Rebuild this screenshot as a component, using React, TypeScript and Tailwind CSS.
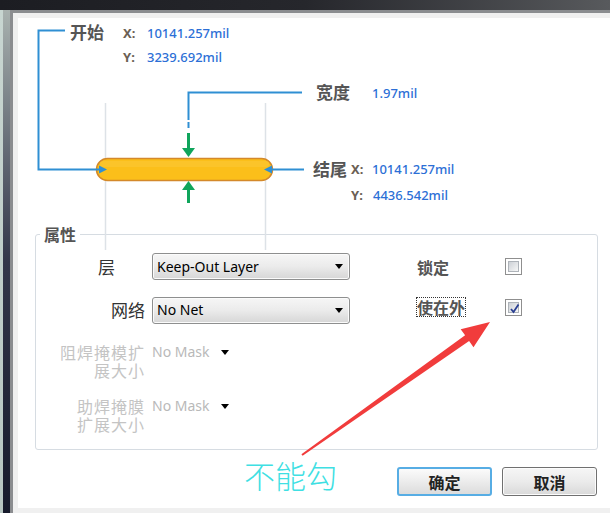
import React from "react";

const CJK = { fontFamily: "'Noto Sans CJK SC', 'Noto Sans', sans-serif" };
const LAT = { fontFamily: "'Noto Sans', 'Noto Sans CJK SC', sans-serif" };

function Tri({ color = "#000" }: { color?: string }) {
  return (
    <svg width="8" height="5" viewBox="0 0 8 5">
      <polygon points="0,0 8,0 4,5" fill={color} />
    </svg>
  );
}

function Select({ value }: { value: string }) {
  return (
    <div className="ml-[7px] flex h-[27px] w-[198px] items-center justify-between rounded-[3px] border border-[#8e8f8f] bg-gradient-to-b from-[#f6f6f6] via-[#ebebeb] to-[#d6d6d6] pl-[4px] pr-[6px] shadow-[inset_0_0_0_1px_#fbfbfb]">
      <span className="text-[14px] leading-[18px] text-black" style={LAT}>
        {value}
      </span>
      <Tri />
    </div>
  );
}

function Check({ checked }: { checked?: boolean }) {
  return (
    <div className="flex h-[17px] w-[17px] items-center justify-center border border-[#8f8f8f] bg-white p-[2px]">
      <div className="relative h-full w-full border border-[#aeb3b9] bg-gradient-to-br from-[#cdd1d6] to-[#f7f7f7]">
        {checked && (
          <svg className="absolute left-[0px] top-[0px]" width="11" height="11" viewBox="0 0 11 11">
            <path d="M2 6 L4.5 9 L9.5 1.5" stroke="#2a3f92" strokeWidth="1.8" fill="none" />
          </svg>
        )}
      </div>
    </div>
  );
}

function DiagLabel({ cls, children }: { cls: string; children: React.ReactNode }) {
  return (
    <div className={`absolute h-[20px] whitespace-nowrap text-[17px] font-bold leading-[20px] text-[#555555] ${cls}`} style={CJK}>
      {children}
    </div>
  );
}

function Coord({ cls, children }: { cls: string; children: React.ReactNode }) {
  return (
    <div className={`absolute h-[20px] whitespace-nowrap text-[13px] font-bold leading-[20px] text-[#6b6054] ${cls}`} style={LAT}>
      {children}
    </div>
  );
}

function Num({ cls, children }: { cls: string; children: React.ReactNode }) {
  return (
    <div className={`absolute h-[20px] whitespace-nowrap text-[13px] font-medium leading-[20px] text-[#2c6fd6] ${cls}`} style={LAT}>
      {children}
    </div>
  );
}

function TwoLine({ a, b }: { a: string; b: string }) {
  return (
    <div className="flex w-[109px] flex-col items-end text-[16px] leading-[18px] tracking-[1px] text-[#c4c4c4]">
      <span className="h-[18px] whitespace-nowrap">{a}</span>
      <span className="h-[18px] whitespace-nowrap">{b}</span>
    </div>
  );
}

export default function App() {
  return (
    <div className="relative flex h-[513px] w-[610px] flex-col overflow-hidden bg-[#f0f0f0]" style={CJK}>
      {/* title bar */}
      <div className="h-[10px] shrink-0 bg-gradient-to-r from-[#1c1d22] via-[#26272c] to-[#585a5d]" />
      <div className="flex min-h-0 flex-1">
        {/* left window frame */}
        <div className="flex w-[10px] shrink-0">
          <div className="w-[3px] bg-gradient-to-b from-[#c8d6d1] to-[#b7c6c2]" />
          <div className="w-[7px] bg-gradient-to-b from-[#a9b2af] via-[#33374a] to-[#161a2b]" />
        </div>
        <div className="flex flex-1 flex-col border-l-[3px] border-t-[3px] border-[#8b8d90] bg-[#f0f0f0] pb-[5px] pl-[5px] pt-[5px]">
          <div className="relative flex flex-1 flex-col bg-white">
            {/* diagram */}
            <div className="relative h-[207px] shrink-0">
              <svg className="pointer-events-none absolute left-0 top-0 z-10 overflow-visible" width="592" height="240" viewBox="0 0 592 240">
                {/* guides */}
                <line x1="87.5" y1="85" x2="87.5" y2="232" stroke="#dde2e7" strokeWidth="1.5" />
                <line x1="247.5" y1="85" x2="247.5" y2="232" stroke="#dde2e7" strokeWidth="1.5" />
                {/* pill */}
                <rect x="78.5" y="140.5" width="176" height="22" rx="11" fill="#fbbf1a" stroke="#d4892a" strokeWidth="1.5" />
                <rect x="82" y="143" width="169" height="6" rx="3" fill="#fcc93a" opacity="0.5" />
                {/* start bracket */}
                <path d="M47 12.5 H20.5 V151.5 H83" stroke="#2f8fd3" strokeWidth="2" fill="none" />
                <polygon points="89,151.5 81,147.5 81,155.5" fill="#2f8fd3" />
                {/* end line */}
                <path d="M286 151.5 H252" stroke="#2f8fd3" strokeWidth="2" fill="none" />
                <polygon points="246,151.5 254,147.5 254,155.5" fill="#2f8fd3" />
                {/* width line */}
                <path d="M284 74.5 H170.5 V102" stroke="#2f8fd3" strokeWidth="2" fill="none" />
                <path d="M170.5 104 V110" stroke="#2f8fd3" strokeWidth="2" fill="none" />
                {/* green arrows */}
                <rect x="169" y="115" width="3" height="17" fill="#10a55c" />
                <polygon points="164,130 177,130 170.5,139" fill="#10a55c" />
                <polygon points="170.5,163 164,172 177,172" fill="#10a55c" />
                <rect x="169" y="170" width="3" height="15" fill="#10a55c" />
              </svg>

              <DiagLabel cls="left-[52px] top-[4px]">开始</DiagLabel>
              <Coord cls="left-[105px] top-[5px]">X:</Coord>
              <Num cls="left-[129px] top-[5px]">10141.257mil</Num>
              <Coord cls="left-[105px] top-[29px]">Y:</Coord>
              <Num cls="left-[129px] top-[29px]">3239.692mil</Num>

              <DiagLabel cls="left-[298px] top-[64px]">宽度</DiagLabel>
              <Num cls="left-[354px] top-[65px]">1.97mil</Num>

              <DiagLabel cls="left-[295px] top-[141px]">结尾</DiagLabel>
              <Coord cls="left-[333px] top-[141px]">X:</Coord>
              <Num cls="left-[354px] top-[141px]">10141.257mil</Num>
              <Coord cls="left-[333px] top-[167px]">Y:</Coord>
              <Num cls="left-[355px] top-[167px]">4436.542mil</Num>
            </div>

            {/* properties group */}
            <fieldset className="ml-[17px] h-[225px] w-[563px] shrink-0 rounded-[3px] border border-[#d6dce2] pt-[10px]">
              <legend className="ml-[4px] px-[4px] text-[16px] font-bold leading-[18px] text-[#555555]">属性</legend>

              <div className="flex h-[27px] items-center">
                <div className="w-[109px] pr-[30px] text-right text-[17px] leading-[20px] text-[#333333]">层</div>
                <Select value="Keep-Out Layer" />
                <div className="ml-[66px] flex items-center">
                  <div className="w-[89px]">
                    <span className="border border-transparent text-[16px] font-bold leading-[18px] text-[#555555]">锁定</span>
                  </div>
                  <Check />
                </div>
              </div>

              <div className="mt-[17px] flex h-[26px] items-center">
                <div className="w-[109px] text-right text-[17px] leading-[20px] text-[#333333]">网络</div>
                <Select value="No Net" />
                <div className="mb-[6px] ml-[66px] flex items-center">
                  <div className="w-[89px]">
                    <span className="inline-block border border-dotted border-[#333333] text-[16px] font-bold leading-[18px] text-[#555555]">使在外</span>
                  </div>
                  <Check checked />
                </div>
              </div>

              <div className="mt-[20px] flex items-start">
                <TwoLine a="阻焊掩模扩" b="展大小" />
                <div className="ml-[7px] flex h-[18px] items-center">
                  <span className="text-[14px] leading-[18px] text-[#b9b9b9]" style={LAT}>No Mask</span>
                  <span className="ml-[12px] flex items-center"><Tri /></span>
                </div>
              </div>

              <div className="mt-[18px] flex items-start">
                <TwoLine a="助焊掩膜" b="扩展大小" />
                <div className="ml-[7px] flex h-[18px] items-center">
                  <span className="text-[14px] leading-[18px] text-[#b9b9b9]" style={LAT}>No Mask</span>
                  <span className="ml-[12px] flex items-center"><Tri /></span>
                </div>
              </div>
            </fieldset>

            {/* buttons */}
            <div className="mt-[17px] flex justify-end gap-[10px] pr-[13px]">
              <button className="flex h-[29px] w-[95px] items-center justify-center rounded-[3px] border-2 border-[#57ade4] bg-gradient-to-b from-[#fbfbfb] via-[#ececec] to-[#dcdcdc] text-[16px] font-bold leading-[18px] text-[#222222]">
                确定
              </button>
              <button className="flex h-[29px] w-[95px] items-center justify-center rounded-[3px] border border-[#707070] bg-gradient-to-b from-[#f6f6f6] via-[#ebebeb] to-[#d9d9d9] text-[16px] font-bold leading-[18px] text-[#222222] shadow-[inset_0_0_0_1px_#fcfcfc]">
                取消
              </button>
            </div>
          </div>
        </div>
      </div>

      {/* annotation overlay */}
      <svg className="pointer-events-none absolute left-0 top-0 z-20" width="610" height="513" viewBox="0 0 610 513">
        <polygon
          points="301.4,454.2 465.1,335.3 460.7,329.2 490,322 473.5,347.2 469.1,341.1 302.6,455.8"
          fill="#f13c3c"
        />
      </svg>
      <div className="absolute left-[244px] top-[458px] z-20 whitespace-nowrap text-[31px] font-light leading-[34px] text-[#3fdfe3]">
        不能勾
      </div>
    </div>
  );
}
